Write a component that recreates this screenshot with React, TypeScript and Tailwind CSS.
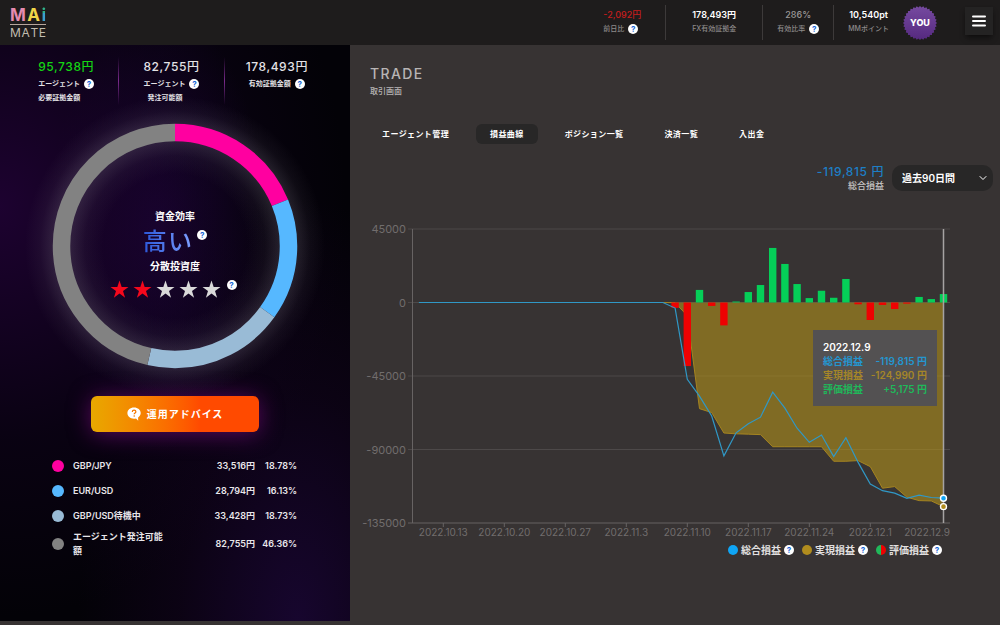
import React from "react";
import { ChevronDown } from "lucide-react";

const AXIS_RIGHT = 943.5;
const DAY_STEP = 12.2;
const LEADING_DAYS = 21;

// [realized, unrealized] in yen, one entry per trading day
const ACTIVE_DAYS: [number, number][] = [
  [-100, -3300],
  [-8100, -38900],
  [-65000, 7700],
  [-67400, -2100],
  [-79900, -14000],
  [-80400, 600],
  [-80600, 6400],
  [-80900, 10700],
  [-88300, 33400],
  [-88300, 23600],
  [-88300, 11300],
  [-88300, 2700],
  [-88300, 7200],
  [-97200, 2900],
  [-97200, 14400],
  [-96800, -1100],
  [-100500, -10700],
  [-113700, -1500],
  [-112700, -4000],
  [-119200, -700],
  [-121300, 3400],
  [-121500, 2100],
  [-124990, 5175],
];

const DAYS: [number, number][] = [
  ...Array.from({ length: LEADING_DAYS }, (): [number, number] => [0, 0]),
  ...ACTIVE_DAYS,
];

const Y_TICKS = [45000, 0, -45000, -90000, -135000];
const X_TICKS = [
  { label: "2022.10.13", ago: 41 },
  { label: "2022.10.20", ago: 36 },
  { label: "2022.10.27", ago: 31 },
  { label: "2022.11.3", ago: 26 },
  { label: "2022.11.10", ago: 21 },
  { label: "2022.11.17", ago: 16 },
  { label: "2022.11.24", ago: 11 },
  { label: "2022.12.1", ago: 6 },
];

const SHARES = [
  { name: "GBP/JPY", amount: "33,516円", share: 18.78, color: "#ff00a0" },
  { name: "EUR/USD", amount: "28,794円", share: 16.13, color: "#56b8ff" },
  { name: "GBP/USD待機中", amount: "33,428円", share: 18.73, color: "#99bbd6" },
  { name: "エージェント発注可能額", amount: "82,755円", share: 46.36, color: "#828282" },
];

const TABS = ["エージェント管理", "損益曲線", "ポジション一覧", "決済一覧", "入出金"];

const xAt = (ago: number) => AXIS_RIGHT - ago * DAY_STEP;
const yAt = (value: number) => 302.5 - (value / 45000) * 73.5;
const agoOf = (index: number) => DAYS.length - 1 - index;

function Help({ label }: { label: string }) {
  return (
    <button
      type="button"
      aria-label={`${label}の説明`}
      className="flex size-2.5 shrink-0 items-center justify-center rounded-full bg-white text-[8px] leading-none font-bold text-[#1767d8]"
    >
      ?
    </button>
  );
}

function Logo() {
  return (
    <a href="#" aria-label="MAi MATE" className="flex w-9 flex-col">
      <span className="flex justify-between text-[17px] leading-4 font-bold">
        <span className="text-[#e58bb0]">M</span>
        <span className="text-[#f0d648]">A</span>
        <span className="bg-gradient-to-b from-[#2fb38a] from-35% to-[#3b9fd0] to-35% bg-clip-text text-transparent">i</span>
      </span>
      <span className="mt-px flex justify-between border-t border-[#b5a59b] pt-0.5 text-[12px] leading-3 text-[#c1bdaf]">
        <span>M</span>
        <span>A</span>
        <span>T</span>
        <span>E</span>
      </span>
    </a>
  );
}

function YouBadge() {
  const points = Array.from({ length: 64 }, (_, i) => {
    const r = i % 2 ? 15.6 : 17;
    const a = (i * Math.PI) / 32;
    return `${17 + r * Math.cos(a)},${17 + r * Math.sin(a)}`;
  }).join(" ");

  return (
    <button type="button" className="grid size-[34px] shrink-0 place-items-center">
      <svg viewBox="0 0 34 34" className="col-start-1 row-start-1 size-full" aria-hidden="true">
        <defs>
          <linearGradient id="badge" x1="0" y1="0" x2="0" y2="1">
            <stop offset="0" stopColor="#764aa0" />
            <stop offset="1" stopColor="#55297f" />
          </linearGradient>
        </defs>
        <polygon points={points} fill="url(#badge)" />
      </svg>
      <span className="col-start-1 row-start-1 text-[9px] font-extrabold text-white">YOU</span>
    </button>
  );
}

function Header() {
  return (
    <header className="flex h-[45px] items-center justify-between bg-[#1e1c1c] pr-[7px] pl-2.5">
      <Logo />
      <div className="flex items-center">
        <dl className="flex divide-x divide-[#3d3a3a] text-center text-[7px] leading-3 font-medium text-[#8d8a8a]">
          <div className="flex h-[35px] flex-col justify-center gap-0.5 px-6 pb-0.5">
            <dd className="order-first text-[9px] text-[#c51c1c]">-2,092円</dd>
            <dt className="flex items-center gap-1">前日比 <Help label="前日比" /></dt>
          </div>
          <div className="flex h-[35px] flex-col justify-center gap-0.5 px-[26px] pb-0.5">
            <dd className="order-first text-[9px] font-semibold text-white">178,493円</dd>
            <dt>FX有効証拠金</dt>
          </div>
          <div className="flex h-[35px] flex-col justify-center gap-0.5 px-3.5 pb-0.5">
            <dd className="order-first text-[9px] text-[#9a9797]">286%</dd>
            <dt className="flex items-center gap-1">有効比率 <Help label="有効比率" /></dt>
          </div>
          <div className="flex h-[35px] flex-col justify-center gap-0.5 px-3.5 pb-0.5">
            <dd className="order-first text-[9px] font-semibold text-white">10,540pt</dd>
            <dt>MMポイント</dt>
          </div>
        </dl>
        <YouBadge />
        <button
          type="button"
          aria-label="メニュー"
          className="mb-1 ml-7 flex size-7 items-center justify-center bg-[#242323] text-white shadow-md shadow-black/40"
        >
          <svg viewBox="0 0 14 12" className="h-3 w-3.5" aria-hidden="true">
            <path d="M1 1.500h12M1 6h12M1 10.500h12" stroke="currentColor" strokeWidth="2" strokeLinecap="round" />
          </svg>
        </button>
      </div>
    </header>
  );
}

function AccountStats() {
  return (
    <dl className="grid grid-cols-[1fr_1px_1fr_1px_1fr] pt-3 pr-[21px] pl-3.5 text-[7px] leading-[14px] font-bold text-[#e4e2e6]">
      <div className="flex h-12 flex-col items-center">
        <dd className="order-first text-[12px] leading-5 font-medium tracking-wider text-[#14d414]">95,738円</dd>
        <dt>
          <span className="flex items-center gap-1">エージェント <Help label="エージェント必要証拠金額" /></span>
          必要証拠金額
        </dt>
      </div>
      <div className="bg-gradient-to-b from-transparent via-[#7a2a8c] to-transparent" />
      <div className="flex h-12 flex-col items-center">
        <dd className="order-first text-[12px] leading-5 font-medium tracking-wider">82,755円</dd>
        <dt>
          <span className="flex items-center gap-1">エージェント <Help label="エージェント発注可能額" /></span>
          <span className="pl-1">発注可能額</span>
        </dt>
      </div>
      <div className="bg-gradient-to-b from-transparent via-[#7a2a8c] to-transparent" />
      <div className="flex h-12 flex-col items-center">
        <dd className="order-first text-[12px] leading-5 font-medium tracking-wider">178,493円</dd>
        <dt className="flex items-center gap-1">有効証拠金額 <Help label="有効証拠金額" /></dt>
      </div>
    </dl>
  );
}

function Star({ filled }: { filled: boolean }) {
  return (
    <svg viewBox="0 0 20 20" className="size-[19px]" aria-hidden="true">
      <polygon
        points="10,0.5 12.3,7.3 19.5,7.3 13.7,11.6 15.9,18.6 10,14.3 4.1,18.6 6.3,11.6 0.5,7.3 7.7,7.3"
        fill={filled ? "#f4081c" : "#d9d9d9"}
      />
    </svg>
  );
}

function ShareRing() {
  let start = 0;

  return (
    <div className="mx-auto mt-px grid w-full max-w-[330px] place-items-center">
      <svg viewBox="-165 -140 330 280" className="col-start-1 row-start-1 w-full overflow-visible" aria-hidden="true">
        <defs>
          <radialGradient id="ringGlow" gradientUnits="userSpaceOnUse" cx="0" cy="0" r="150">
            <stop offset="0.48" stopColor="#8f8a96" stopOpacity="0" />
            <stop offset="0.6" stopColor="#8f8a96" stopOpacity="0.07" />
            <stop offset="0.7" stopColor="#8f8a96" stopOpacity="0.22" />
            <stop offset="0.82" stopColor="#8f8a96" stopOpacity="0.2" />
            <stop offset="0.9" stopColor="#8f8a96" stopOpacity="0.07" />
            <stop offset="1" stopColor="#8f8a96" stopOpacity="0" />
          </radialGradient>
        </defs>
        <circle r="150" fill="url(#ringGlow)" />
        {SHARES.map(({ name, share, color }) => {
          const offset = -start;
          start += share;
          return (
            <circle
              key={name}
              r="113.500"
              fill="none"
              stroke={color}
              strokeWidth="17.500"
              pathLength={100}
              strokeDasharray={`${share} ${100 - share}`}
              strokeDashoffset={offset}
              transform="rotate(-90)"
            />
          );
        })}
      </svg>
      <div className="col-start-1 row-start-1 flex flex-col items-center pt-3.5 text-[10px] font-bold text-white">
        <p className="leading-4">資金効率</p>
        <div className="flex items-start gap-1">
          <strong className="bg-gradient-to-r from-[#2b56d8] to-[#7fa0ff] bg-clip-text text-2xl leading-9 font-medium tracking-wider text-transparent">
            高い
          </strong>
          <span className="pt-1.5"><Help label="資金効率" /></span>
        </div>
        <p className="leading-3">分散投資度</p>
        <div className="flex items-start gap-1.5 pt-2 pr-1">
          <div role="img" aria-label="5段階中2" className="flex gap-1">
            {[1, 2, 3, 4, 5].map((n) => (
              <Star key={n} filled={n <= 2} />
            ))}
          </div>
          <Help label="分散投資度" />
        </div>
      </div>
    </div>
  );
}

function AdviceButton() {
  return (
    <button
      type="button"
      className="mx-auto flex h-9 w-[168px] items-center justify-center gap-1.5 rounded-md bg-gradient-to-r from-[#e8a800] to-[#ff4a00] to-65% text-[10px] font-bold tracking-widest text-white shadow-[0_2px_22px_#5a0860]"
    >
      <svg viewBox="0 0 14 14" className="size-3.5" aria-hidden="true">
        <path d="M7 0.5C3.2 0.5 0.4 2.9 0.4 6.1s2.8 5.6 6.6 5.6c.7 0 1.400-.1 2-.2L11.200 13.700l-.1-3.200C12.700 9.500 13.700 7.900 13.700 6.100 13.700 2.900 10.800.5 7 .5z" fill="#fff" />
        <path d="M5.300 4.900c0-1.100.8-1.700 1.800-1.700s1.800.6 1.800 1.500c0 1.300-1.700 1.200-1.700 2.600" fill="none" stroke="#f47800" strokeWidth="1.200" />
        <circle cx="7.200" cy="9" r="0.8" fill="#f47800" />
      </svg>
      運用アドバイス
    </button>
  );
}

function ShareTable() {
  return (
    <table className="mx-[52px] mt-[21px] text-[9px] leading-[14px] font-semibold text-[#e8e6ea]">
      <tbody>
        {SHARES.map(({ name, amount, share, color }) => (
          <tr key={name} className="h-[25px] last:h-8">
            <td className="w-[21px]">
              <span className="block size-3 rounded-full" style={{ backgroundColor: color }} />
            </td>
            <th scope="row" className="text-left font-semibold">
              <span className="block w-[95px]">{name}</span>
            </th>
            <td className="w-[87px] text-right">{amount}</td>
            <td className="w-[42px] text-right">{share}%</td>
          </tr>
        ))}
      </tbody>
    </table>
  );
}

function Sidebar() {
  return (
    <aside className="w-[350px] shrink-0 bg-[#030207] bg-[radial-gradient(ellipse_at_0%_28%,#1d0230_0%,#16022855_40%,transparent_70%),radial-gradient(ellipse_at_45%_32%,#180430_0%,transparent_40%),radial-gradient(ellipse_at_85%_100%,#17062e_0%,#11031c99_28%,transparent_52%)]">
      <AccountStats />
      <ShareRing />
      <div className="pt-2.5">
        <AdviceButton />
      </div>
      <ShareTable />
    </aside>
  );
}

function ProfitChart() {
  const total = DAYS.map(([realized, unrealized], i) => `${xAt(agoOf(i))},${yAt(realized + unrealized)}`).join(" ");
  const realizedLine = DAYS.map(([realized], i) => `${xAt(agoOf(i))},${yAt(realized)}`)
    .slice(LEADING_DAYS - 1)
    .join(" ");

  return (
    <svg viewBox="350 220 650 320" className="w-full" role="img" aria-label="損益曲線">
      {Y_TICKS.map((tick) => (
        <g key={tick}>
          <line x1="408" x2="950" y1={yAt(tick)} y2={yAt(tick)} stroke={tick === -135000 ? "#676363" : "#4d4949"} />
          <text x="406" y={yAt(tick) + 4} textAnchor="end" fontSize="11" fill="#716d6d">{tick}</text>
        </g>
      ))}
      <line x1="412.500" x2="412.500" y1={yAt(45000)} y2={yAt(-135000)} stroke="#676363" />

      <polygon points={`${realizedLine} ${AXIS_RIGHT},${yAt(0)}`} fill="#b5951a" fillOpacity="0.58" />
      <polyline points={realizedLine} fill="none" stroke="#a58420" />
      {DAYS.map(([, unrealized], i) =>
        unrealized === 0 ? null : (
          <rect
            key={i}
            x={xAt(agoOf(i)) - 3.7}
            y={Math.min(yAt(unrealized), yAt(0))}
            width="7.400"
            height={Math.abs(yAt(unrealized) - yAt(0))}
            fill={unrealized > 0 ? "#05cf58" : "#ee0202"}
          />
        )
      )}
      <line x1={AXIS_RIGHT} x2={AXIS_RIGHT} y1={yAt(45000)} y2={yAt(-135000)} stroke="#a5a2a2" strokeWidth="1.500" />
      <polyline points={total} fill="none" stroke="#3098c6" strokeWidth="1.200" />
      <circle cx={AXIS_RIGHT} cy={yAt(-119815)} r="3" fill="#0fa5f5" stroke="#fff" strokeWidth="1.400" />
      <circle cx={AXIS_RIGHT} cy={yAt(-124990)} r="3" fill="#b08c1e" stroke="#fff" strokeWidth="1.400" />

      {X_TICKS.map(({ label, ago }) => (
        <g key={label}>
          <line x1={xAt(ago)} x2={xAt(ago)} y1="523" y2="527" stroke="#676363" />
          <text x={xAt(ago)} y="536" textAnchor="middle" fontSize="10" fill="#716d6d">{label}</text>
        </g>
      ))}
      <text x="950" y="536" textAnchor="end" fontSize="10" fill="#716d6d">2022.12.9</text>
    </svg>
  );
}

function ChartTooltip() {
  return (
    <div className="absolute top-[110px] right-[63px] w-[124px] bg-[#535152] p-2.5 text-[10px] leading-[14px] font-semibold">
      <p className="text-white">2022.12.9</p>
      <p className="flex justify-between text-[#2496d0]"><span>総合損益</span><span>-119,815 円</span></p>
      <p className="flex justify-between text-[#a58628]"><span>実現損益</span><span>-124,990 円</span></p>
      <p className="flex justify-between text-[#20b85a]"><span>評価損益</span><span>+5,175 円</span></p>
    </div>
  );
}

function ChartLegend() {
  return (
    <ul className="flex justify-end gap-2 pt-0.5 pr-[58px] text-[10px] leading-4 font-bold text-[#e2e0e0]">
      <li className="flex items-center gap-[3px]">
        <span className="size-2.5 rounded-full bg-[#0fa5f5]" />総合損益 <Help label="総合損益" />
      </li>
      <li className="flex items-center gap-[3px]">
        <span className="size-2.5 rounded-full bg-[#b08c1e]" />実現損益 <Help label="実現損益" />
      </li>
      <li className="flex items-center gap-[3px]">
        <span className="size-2.5 rounded-full bg-gradient-to-r from-[#20b85a] from-50% to-[#ee0202] to-50%" />評価損益 <Help label="評価損益" />
      </li>
    </ul>
  );
}

function TradePanel() {
  return (
    <main className="min-w-0 flex-1 pt-5">
      <div className="px-5">
        <h1 className="text-[14px] leading-[18px] font-medium tracking-widest text-[#b8b5b5]">TRADE</h1>
        <p className="text-[8px] leading-4 font-medium text-[#b8b5b5]">取引画面</p>
      </div>

      <nav className="mt-[25px] flex gap-[13px] px-[18px]">
        {TABS.map((tab) => (
          <a
            key={tab}
            href="#"
            aria-current={tab === "損益曲線" ? "page" : undefined}
            className="rounded-md px-3.5 text-[8px] leading-5 font-bold tracking-wider text-white aria-[current=page]:bg-[#282727]"
          >
            {tab}
          </a>
        ))}
      </nav>

      <div className="mt-5 flex items-center justify-end gap-2 pr-[7px]">
        <div className="text-right">
          <p className="text-[12px] leading-4 font-medium tracking-wider text-[#1d7fc6]">-119,815 円</p>
          <p className="text-[9px] leading-3 font-medium text-[#c9c6c6]">総合損益</p>
        </div>
        <div className="relative">
          <select
            aria-label="表示期間"
            className="block h-[26px] w-[101px] appearance-none rounded-[10px] bg-[#282727] pl-2.5 text-[10px] font-semibold text-white"
          >
            <option>過去90日間</option>
          </select>
          <ChevronDown size={12} className="pointer-events-none absolute top-[7px] right-1 text-white" />
        </div>
      </div>

      <div className="relative mt-7">
        <ProfitChart />
        <ChartTooltip />
      </div>
      <ChartLegend />
    </main>
  );
}

export default function App() {
  return (
    <div className="flex min-h-screen flex-col bg-[#373333] pb-1 [font-family:Inter,'Noto_Sans_CJK_JP',sans-serif]">
      <Header />
      <div className="flex flex-1">
        <Sidebar />
        <TradePanel />
      </div>
    </div>
  );
}
